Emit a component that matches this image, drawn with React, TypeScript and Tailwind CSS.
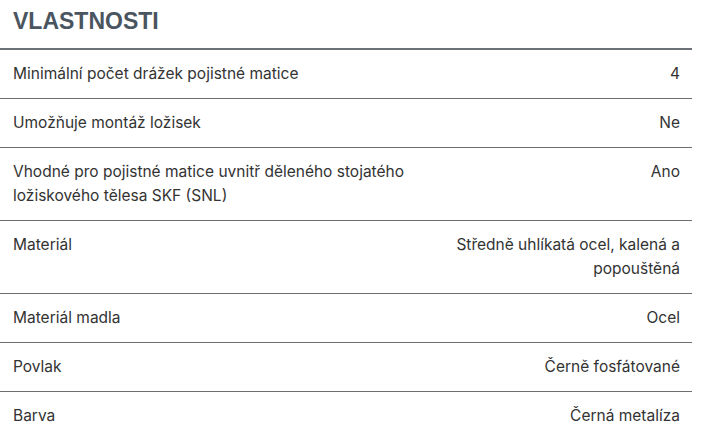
import React from 'react';

const rows: { label: string; value: string }[] = [
  { label: 'Minimální počet drážek pojistné matice', value: '4' },
  { label: 'Umožňuje montáž ložisek', value: 'Ne' },
  { label: 'Vhodné pro pojistné matice uvnitř děleného stojatého ložiskového tělesa SKF (SNL)', value: 'Ano' },
  { label: 'Materiál', value: 'Středně uhlíkatá ocel, kalená a popouštěná' },
  { label: 'Materiál madla', value: 'Ocel' },
  { label: 'Povlak', value: 'Černě fosfátované' },
  { label: 'Barva', value: 'Černá metalíza' },
];

export default function App() {
  return (
    <div className="w-[715px] h-[440px] overflow-hidden bg-white font-['Inter','Liberation_Sans',sans-serif]">
      <div className="w-[692px]">
        <h2 className="h-[50px] pl-[13px] pt-[6px] text-[23px] leading-[30px] font-bold text-[#4a5560] font-['Liberation_Sans',Arial,sans-serif] border-b-2 border-[#6b7177]">
          VLASTNOSTI
        </h2>
        {rows.map((row, i) => (
          <div
            key={row.label}
            className={`grid grid-cols-[1fr_240px] gap-4 pl-[13px] pr-3 py-3 text-[15.5px] leading-6 text-[#333333] ${
              i < rows.length - 1 ? 'border-b border-[#6e6e6e]' : ''
            }`}
          >
            <div>{row.label}</div>
            <div className="text-right">{row.value}</div>
          </div>
        ))}
      </div>
    </div>
  );
}
